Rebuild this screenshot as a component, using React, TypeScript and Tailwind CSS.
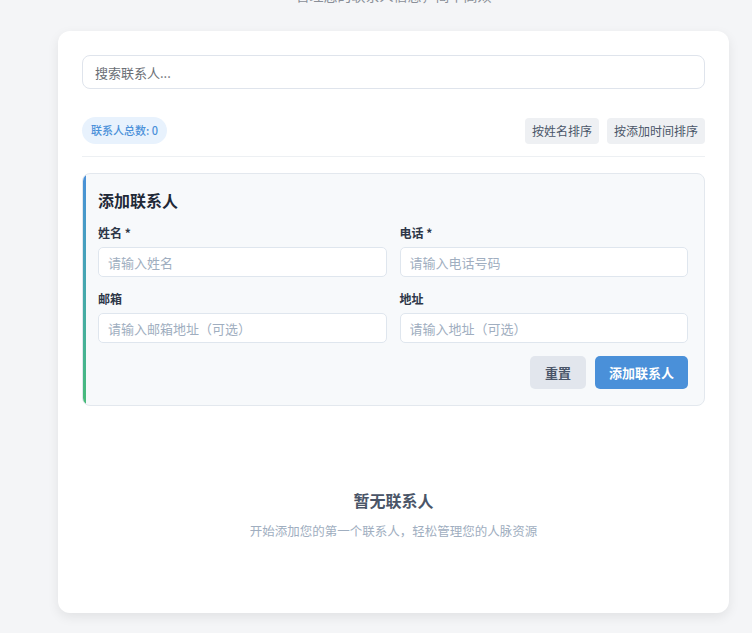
import React from "react";

const font = { fontFamily: '"Noto Sans CJK SC", "Noto Sans", sans-serif' };

const Field = ({ label, placeholder }: { label: string; placeholder: string }) => (
  <div className="flex flex-col">
    <label className="text-[12px] leading-4 font-bold text-[#2d3748] mb-[6px]">{label}</label>
    <input
      className="h-[30px] rounded-[5px] border border-[#dfe6ee] bg-white px-[9px] text-[13px] text-[#2d3748] placeholder:text-[#a0aec0] outline-none"
      placeholder={placeholder}
    />
  </div>
);

export default function App() {
  return (
    <div className="min-h-screen bg-[#f4f5f7] overflow-hidden" style={font}>
      <div className="pl-[58px] pr-[23px] mt-[-15px]">
        <p className="text-center text-[14px] leading-5 text-[#8a8f98]">管理您的联系人信息，简单高效</p>
        <div className="mt-[26px] bg-white rounded-[12px] shadow-[0_4px_12px_rgba(0,0,0,0.08)] px-[24px] pt-[24px] pb-[24px]">
          <input
            className="w-full h-[34px] rounded-[8px] border border-[#dfe4ec] px-[12px] text-[13px] placeholder:text-[#6b6f76] outline-none"
            placeholder="搜索联系人..."
          />

          <div className="mt-[28px] flex items-center justify-between pb-[12px] border-b border-[#edf0f3]">
            <span className="h-[27px] flex items-center rounded-full bg-[#e8f2fd] px-[9px] text-[11px] font-medium text-[#4a90d9]">
              联系人总数: 0
            </span>
            <div className="flex gap-[8px]">
              <button className="h-[26px] px-[7px] rounded-[4px] bg-[#eef0f3] text-[12px] text-[#4a5568]">按姓名排序</button>
              <button className="h-[26px] px-[7px] rounded-[4px] bg-[#eef0f3] text-[12px] text-[#4a5568]">按添加时间排序</button>
            </div>
          </div>

          <div className="mt-[16px] rounded-[8px] border border-[#e3e8ee] bg-[#f7f9fb] flex overflow-hidden">
            <div className="w-[3px] bg-gradient-to-b from-[#4a90d9] to-[#48bb78]" />
            <div className="flex-1 pl-[12px] pr-[16px] pt-[14px] pb-[16px]">
              <h3 className="text-[16px] leading-6 font-bold text-[#1f2937] mb-[13px]">添加联系人</h3>
              <div className="grid grid-cols-2 gap-x-[13px] gap-y-[14px]">
                <Field label="姓名 *" placeholder="请输入姓名" />
                <Field label="电话 *" placeholder="请输入电话号码" />
                <Field label="邮箱" placeholder="请输入邮箱地址（可选）" />
                <Field label="地址" placeholder="请输入地址（可选）" />
              </div>
              <div className="mt-[13px] flex justify-end gap-[9px]">
                <button className="h-[33px] px-[15px] rounded-[5px] bg-[#e2e6ed] text-[13px] font-bold text-[#4a5568]">重置</button>
                <button className="h-[33px] px-[14px] rounded-[5px] bg-[#4a90d9] text-[13px] font-bold text-white">添加联系人</button>
              </div>
            </div>
          </div>

          <div className="pt-[82px] pb-[49px] text-center">
            <h3 className="text-[16px] leading-6 font-bold text-[#4a5568]">暂无联系人</h3>
            <p className="mt-[10px] text-[12.5px] leading-[18px] text-[#a0aec0]">开始添加您的第一个联系人，轻松管理您的人脉资源</p>
          </div>
        </div>
      </div>
    </div>
  );
}
